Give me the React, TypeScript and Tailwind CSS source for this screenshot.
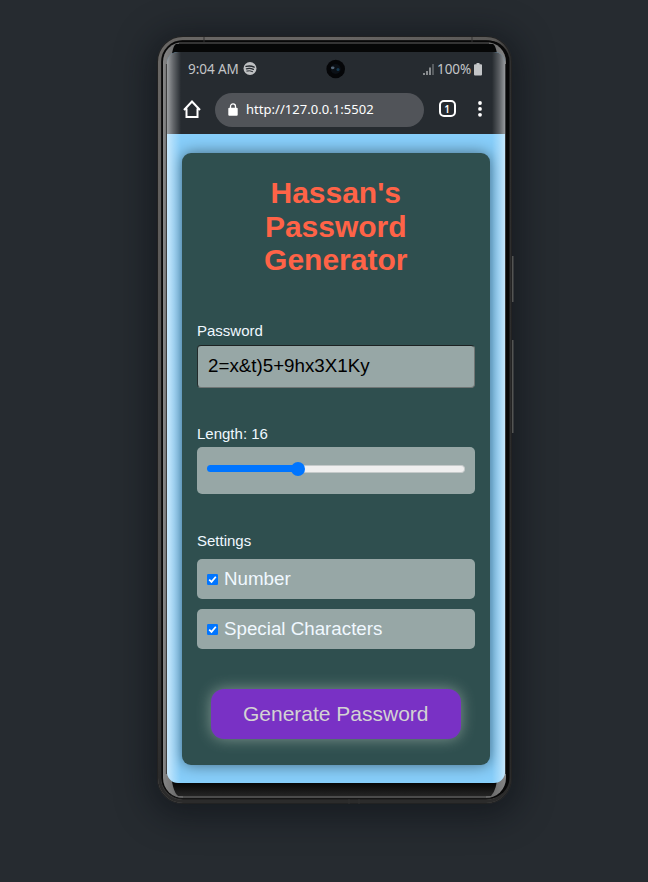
import type { ReactNode } from "react";

function StatusBar() {
  return (
    <div className="relative flex h-[34px] items-center pl-[21px] pr-[21.5px] font-['Noto_Sans',sans-serif] text-[13.5px] tracking-[-0.05px] text-[#c3c5c7]">
      <span className="w-[55px] whitespace-nowrap">9:04 AM</span>
      <svg width="14" height="14" viewBox="0 0 14 14">
        <circle cx="7" cy="6.5" r="6.5" fill="#bfc1c3" />
        <g fill="none" stroke="#262b30" strokeLinecap="round">
          <path d="M3 4.4Q7.3 3.2 11.2 5.1" strokeWidth="1.4" />
          <path d="M3.4 6.8Q7 5.8 10.4 7.4" strokeWidth="1.2" />
          <path d="M3.8 9Q7 8.2 9.6 9.6" strokeWidth="1" />
        </g>
      </svg>
      <svg className="absolute left-[159px] top-[7px]" width="20" height="20" viewBox="0 0 20 20">
        <circle cx="9.7" cy="10" r="9.3" fill="#050608" />
        <circle cx="9.7" cy="10" r="5" fill="#0b1016" />
        <ellipse cx="6.7" cy="8.8" rx="1.8" ry="1.4" fill="#536577" />
        <circle cx="12" cy="10.4" r="1.5" fill="#14384f" />
      </svg>
      <svg className="ml-auto" width="12" height="13" viewBox="0 0 12 13">
        <path d="M1 10v2M4 8v4M7 4.5V12" stroke="#bfc1c3" strokeWidth="1.3" />
        <path d="M10 1v11" stroke="#73777a" strokeWidth="1.3" />
      </svg>
      <span className="ml-[2px] w-[35px] whitespace-nowrap">100%</span>
      <svg className="ml-[2px]" width="9" height="13" viewBox="0 0 9 13">
        <path d="M2.5 0h3v1.3H7q1 0 1 1V11.5q0 1-1 1H1q-1 0-1-1V2.3q0-1 1-1h1.5z" fill="#c3c5c7" />
      </svg>
    </div>
  );
}

function AddressBar() {
  return (
    <div className="flex h-12 items-center pb-0.5 pl-4">
      <svg width="18" height="19" viewBox="0 0 18 19" fill="none" stroke="white" strokeWidth="2">
        <path d="M1 10L9 1.5L17 10M3.5 8.5V17H14.5V8.5" />
      </svg>
      <div className="ml-3.5 mt-0.5 flex h-[34px] w-[209px] items-center rounded-full bg-[#515459] pl-[13px]">
        <svg className="-mt-0.5" width="10" height="13" viewBox="0 0 10 13">
          <rect x="0.3" y="4.7" width="9.4" height="8" rx="1" fill="white" />
          <path d="M2.5 5V3.4a2.5 2.5 0 0 1 5 0V5" fill="none" stroke="white" strokeWidth="1.3" />
        </svg>
        <span className="ml-2 whitespace-nowrap font-['Noto_Sans',sans-serif] text-[13px] tracking-[0.04px] text-white">http://127.0.0.1:5502</span>
      </div>
      <div className="-mt-px ml-[14.5px] flex h-[17px] w-[17px] items-center justify-center rounded-[5px] border-2 border-white font-['Noto_Sans',sans-serif] text-[10px] font-semibold leading-none text-white">1</div>
      <svg className="ml-[21px]" width="6" height="17" viewBox="0 0 6 17" fill="white">
        <circle cx="3" cy="2" r="1.9" />
        <circle cx="3" cy="7.9" r="1.9" />
        <circle cx="3" cy="13.8" r="1.9" />
      </svg>
    </div>
  );
}

function Option({ children }: { children: ReactNode }) {
  return (
    <div className="flex h-[40.5px] items-center rounded-[5px] bg-[#97a7a6] pl-[10px] text-[18.75px] text-[#f0f8ff]">
      <svg width="11" height="11" viewBox="0 0 11 11">
        <rect width="11" height="11" rx="1.3" fill="#0075ff" />
        <path d="M2.2 5.6L4.5 7.9L8.8 2.8" fill="none" stroke="white" strokeWidth="1.7" />
      </svg>
      <span className="ml-[6px]">{children}</span>
    </div>
  );
}

function Generator() {
  return (
    <div className="flex h-[611.5px] w-[307.5px] flex-col rounded-[9px] bg-[#2f4f4f] px-[15px] pt-[23px] font-['Liberation_Sans',sans-serif] shadow-[0_0_15px_rgba(0,0,0,0.5)]">
      <h1 className="mx-auto w-[160px] text-center text-[30px] font-bold leading-[33.6px] text-[#ff6347]">Hassan's Password Generator</h1>
      <div className="mt-[45px] text-[15px] leading-[17px] text-[#f0f8ff]">Password</div>
      <div className="mt-[6px] flex h-[43px] items-center rounded-[4px] border border-b-[#707675] border-l-[#222b2b] border-r-[#707675] border-t-[#1c2222] bg-[#97a7a6] pl-[10px] text-[18.75px] text-black">2=x&amp;t)5+9hx3X1Ky</div>
      <div className="mt-[37px] text-[15px] leading-[17px] text-[#f0f8ff]">Length: 16</div>
      <div className="mt-[5px] flex h-[47.5px] items-start rounded-[5px] bg-[#97a7a6] px-[10px] pt-[14px]">
        <div className="flex h-4 w-full items-center">
          <div className="h-[7px] w-[87px] rounded-l-full bg-[#0075ff]" />
          <div className="z-10 -ml-[3px] h-[14px] w-[14px] rounded-full bg-[#0075ff]" />
          <div className="-ml-1.5 h-[8px] flex-1 rounded-r-full border border-l-0 border-[#c5caca] bg-[#efefef]" />
        </div>
      </div>
      <div className="mt-[37.5px] text-[15px] leading-[17px] text-[#f0f8ff]">Settings</div>
      <div className="mt-[10px] flex flex-col gap-[9.5px]">
        <Option>Number</Option>
        <Option>Special Characters</Option>
      </div>
      <button className="mx-auto mt-[39.5px] h-[50px] w-[250px] rounded-[13px] bg-[#7931c5] text-[21px] text-[#d3d3d3] shadow-[0_0_15px_rgba(220,235,220,0.45)]">Generate Password</button>
    </div>
  );
}

function Bezel() {
  return (
    <svg className="absolute inset-0" width="357" height="768" viewBox="0 0 357 768" fill="none">
      <defs>
        <linearGradient id="edge" x2="1" y2="0">
          <stop stopColor="#686664" /><stop offset=".5" stopColor="#686664" /><stop offset=".96" stopColor="#5a5856" /><stop offset="1" stopColor="#303030" />
        </linearGradient>
        <linearGradient id="edgeFade" x2="0" y2="1">
          <stop offset=".03" stopColor="#242424" stopOpacity="0" /><stop offset=".7" stopColor="#262626" stopOpacity=".45" /><stop offset=".97" stopColor="#2b2b2b" stopOpacity="1" />
        </linearGradient>
        <linearGradient id="glass" x2="1" y2="0">
          <stop stopColor="#858585" /><stop offset=".06" stopColor="#606060" /><stop offset=".94" stopColor="#606060" /><stop offset="1" stopColor="#858585" />
        </linearGradient>
        <linearGradient id="base" x2="0" y2="1">
          <stop stopColor="#000" /><stop offset=".5" stopColor="#080808" /><stop offset="1" stopColor="#242424" />
        </linearGradient>
      </defs>
      <rect width="355" height="768" rx="26" fill="#222" />
      <rect x="2.5" y="2.5" width="350" height="763" rx="23.5" stroke="url(#edge)" strokeWidth="3" />
      <rect x="2.5" y="2.5" width="350" height="763" rx="23.5" stroke="url(#edgeFade)" strokeWidth="3" />
      <rect x="4.5" y="4.5" width="348" height="758" rx="21" fill="#080808" />
      <rect x="6" y="6" width="343" height="756" rx="20" fill="url(#glass)" />
      <path d="M22 7H332" stroke="#343434" strokeWidth="2" />
      <path d="M14 28Q15 10 19 8H336Q340 10 341 28Z" fill="#060707" />
      <path d="M14 735Q15 755 21 760H334Q340 754 341 735Z" fill="url(#base)" />
      <path d="M9.4 28V738M348.5 28V738" stroke="#383838" strokeWidth="1" />
      <path d="M26 761H329" stroke="#444" strokeWidth="1.5" />
      <path d="M47 1V6M315 1V6M192 763V768M202 763V768" stroke="#303030" />
      <path d="M355.8 220V266M355.8 304V397" stroke="#62615f" strokeWidth="1.2" />
    </svg>
  );
}

export default function App() {
  return (
    <div className="flex h-[882px] w-[648px] items-start bg-[#262b30] pl-[157px] pt-9">
      <div className="relative h-[768px] w-[355px] rounded-[25px] shadow-[0_5px_32px_8px_rgba(10,14,19,0.52)]">
        <Bezel />
        <main className="relative ml-[10px] mt-4 flex h-[731px] w-[337.5px] flex-col overflow-hidden rounded-[11px] bg-[#87cefa]">
          <header className="h-[82px] bg-[#262b30]">
            <StatusBar />
            <AddressBar />
          </header>
          <div className="pl-[15px] pt-[19px]"><Generator /></div>
          <div className="pointer-events-none absolute inset-y-0 left-0 w-[14px] bg-[linear-gradient(90deg,rgba(255,255,255,0.55),rgba(255,255,255,0.28)_45%,transparent)]" />
          <div className="pointer-events-none absolute inset-y-0 right-0 w-[13px] bg-[linear-gradient(270deg,rgba(255,255,255,0.52),rgba(255,255,255,0.24)_45%,transparent)]" />
        </main>
      </div>
    </div>
  );
}
